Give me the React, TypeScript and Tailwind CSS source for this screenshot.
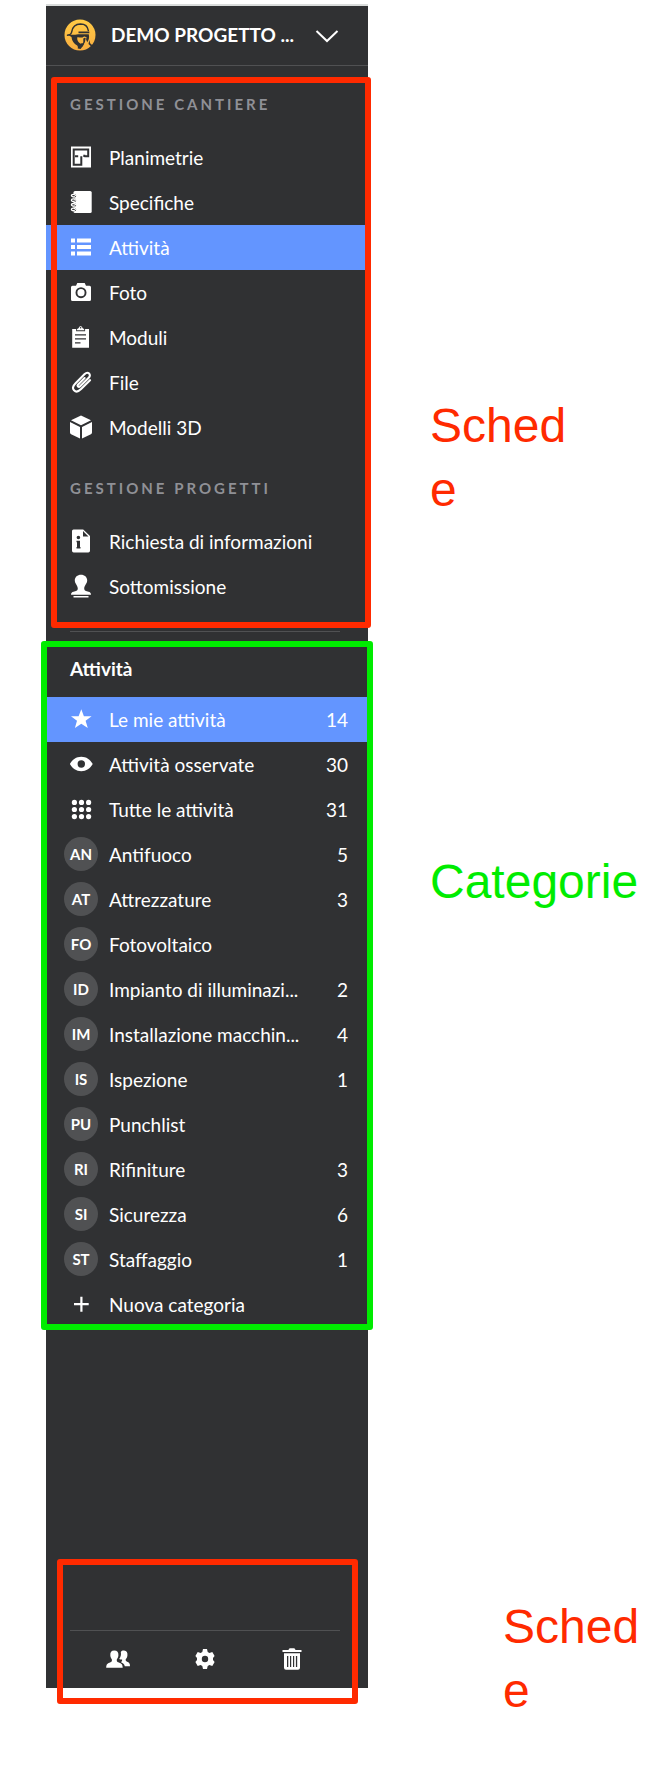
import type { ReactNode } from 'react';

type IconProps = { children: ReactNode; size?: string };

function Icon({ children, size = 'size-6' }: IconProps) {
  return (
    <svg viewBox="0 0 24 24" className={`${size} block fill-white`} aria-hidden="true">
      {children}
    </svg>
  );
}

const PlanIcon = () => (
  <Icon>
    <path d="M2 1.500h20v21H2z" />
    <path d="M15.300 11.200h3.900V4.500H4.700v15.200h7.600v-8.500M6 11.200h3.200M15.300 9.700v2.400" fill="none" stroke="#303133" strokeWidth="2" />
  </Icon>
);

const NotebookIcon = () => (
  <Icon>
    <path d="M6 1h15.200a1.500 1.500 0 0 1 1.500 1.500v19a1.500 1.500 0 0 1-1.500 1.500H6a1.500 1.500 0 0 1-1.500-1.500v-19A1.500 1.500 0 0 1 6 1z" />
    <g fill="none" strokeLinecap="round">
      <path d="M5.500 5.700H3M5.500 10.300H3M5.500 14.900H3M5.500 19.500H3" stroke="#303133" strokeWidth="3.400" />
      <path d="M6.700 5.500c-1-1.700-4.300-1.500-4.300.1 0 1.200 1.700 1.500 2.900 1M6.700 10.100c-1-1.700-4.300-1.500-4.300.1 0 1.200 1.700 1.500 2.900 1M6.700 14.700c-1-1.700-4.300-1.500-4.300.1 0 1.200 1.700 1.500 2.900 1M6.700 19.300c-1-1.700-4.300-1.500-4.300.1 0 1.200 1.700 1.500 2.900 1" stroke="white" strokeWidth="1.300" />
    </g>
  </Icon>
);

const ListIcon = () => (
  <Icon>
    <path d="M2 3.500h4v4H2zM8 3.500h14v4H8zM2 10h4v4H2zM8 10h14v4H8zM2 16.500h4v4H2zM8 16.500h14v4H8z" />
  </Icon>
);

const CameraIcon = () => (
  <Icon>
    <path fillRule="evenodd" d="M8.300 3h7.400l1.300 2.800h3.500A1.500 1.500 0 0 1 22 7.300v12.200a1.500 1.500 0 0 1-1.500 1.500h-17A1.500 1.500 0 0 1 2 19.500V7.300a1.500 1.500 0 0 1 1.500-1.500H7zM12 7.200a5.500 5.500 0 1 0 0 11 5.500 5.500 0 0 0 0-11zm0 1.900a3.600 3.600 0 1 1 0 7.200 3.600 3.600 0 0 1 0-7.200z" />
  </Icon>
);

const ClipboardIcon = () => (
  <Icon>
    <path fillRule="evenodd" d="M3.200 4h3.900v2.200h9V4H20v18.700H3.200zM6 9.300v1.300h11V9.300zm0 4v1.300h11v-1.300zm0 4v1.300h5.500v-1.300z" />
    <path d="M7.700 5.300c.2-1.500 1.200-1.600 2-2.300.5-2.500 3.300-2.500 3.800 0 .8.700 1.800.8 2 2.300z" />
    <circle cx="11.600" cy="2.700" r=".8" fill="#303133" />
  </Icon>
);

const ClipIcon = () => (
  <Icon>
    <path
      d="m15.600 8-6.400 6.400c-1.500 1.600.4 3.400 1.900 1.900l8.600-8.600c1.400-1.400 1.500-3 .4-4.100s-2.900-1-4.400.5L6.600 13.200c-2.900 2.900-3.300 5.400-1.600 7.100s4.500 1.400 7.100-1.200l8.900-8.900"
      fill="none"
      stroke="white"
      strokeWidth="2.100"
      strokeLinecap="round"
    />
  </Icon>
);

const CubeIcon = () => (
  <Icon>
    <path d="M12 .6 22 5.300 12 10.200 2 5.300zM1 7.100l10 4.900v11.600L2.100 19.200A2 2 0 0 1 1 17.400zM23 7.100v10.300a2 2 0 0 1-1.100 1.800L13 23.600V12z" />
  </Icon>
);

const DocInfoIcon = () => (
  <Icon>
    <path fillRule="evenodd" d="M4.500.5h9.700L21 7v14.800a1.700 1.700 0 0 1-1.700 1.700H4.700A1.700 1.700 0 0 1 3 21.800V2A1.500 1.500 0 0 1 4.500.500zM14 2v5.500h5.500zM9.400 6.700a1.800 1.800 0 1 0 0 3.600 1.800 1.800 0 0 0 0-3.600zM7.500 11.700v1.500h.5v4.900h-.5v1.500h4v-1.500H11v-6.400z" />
  </Icon>
);

const StampIcon = () => (
  <Icon>
    <path d="M12 .8c3.600 0 6.200 2.400 6.200 5.700 0 3.100-3 5-3 8 0 2.300 1.800 2.700 4.300 3.200 1.500.3 2.500 1 2.500 3.100H2c0-2.100 1-2.800 2.500-3.100 2.500-.5 4.300-.9 4.300-3.200 0-3-3-4.900-3-8C5.800 3.200 8.400.8 12 .8zM4.500 22h15v1.500h-15z" />
  </Icon>
);

const StarIcon = () => (
  <Icon>
    <path d="m12.300 2.200 2.600 7h7.700l-6 4.600 2.200 7.300-6.500-4.400-6.400 4.400L8 13.800 2 9.200h7.600z" />
  </Icon>
);

const EyeIcon = () => (
  <Icon>
    <path fillRule="evenodd" d="M12.300 4.800c5 0 9 2.800 11.400 7.200-2.400 4.400-6.400 7.200-11.400 7.200S3.300 16.400.900 12C3.300 7.600 7.300 4.800 12.300 4.800zm0 3.500a3.700 3.700 0 1 0 0 7.400 3.700 3.700 0 0 0 0-7.400z" />
  </Icon>
);

const dotCentres = [5.4, 12.5, 19.6];

const GridIcon = () => (
  <Icon>
    {dotCentres.map((cy) => dotCentres.map((cx) => <circle key={`${cx}-${cy}`} cx={cx} cy={cy} r="2.600" />))}
  </Icon>
);

const PlusIcon = () => (
  <Icon>
    <path d="M11.300 4.700h2.200v6.300h6.200v2.200h-6.200v6.500h-2.200v-6.500H5V11h6.300z" />
  </Icon>
);

const PeopleIcon = () => (
  <Icon>
    <path d="M14.800 5.100c.9-1.300 2-1.700 3.300-1.500 2.700.3 3.600 2.300 3.300 5-.2 1.600-.8 2.900-1.700 3.700-.2 1.400.3 2 1.400 2.500 2 .8 2.900 1.400 2.900 4.500h-5.200c-.5-2.300-1.800-3.200-3.800-4.100.900-.7 1.300-1.500 1.100-2.600-1.300-.3-2.200-.3-2.900-.7 1.400-1.400 2.200-4.400 1.600-6.800z" />
    <path d="M8.300 3.600c3 0 4.300 1.900 4.100 4.700-.1 1.800-.7 3.100-1.600 4.100-.2 1.500.2 2.300 1.500 2.900 2.700 1.100 4.400 1.700 4.400 5.400H.200c0-3.700 1.600-4.300 4.200-5.400 1.300-.6 1.700-1.400 1.500-2.900-.9-1-1.500-2.300-1.600-4.100-.2-2.800 1-4.700 4-4.700z" />
  </Icon>
);

const GearIcon = () => (
  <Icon>
    <path fillRule="evenodd" d="M10 2h4l.7 3 1.700 1 2.900-.9 2.300 3.800-1.600 2.200v1.800l1.600 2.200-2.300 3.800-2.900-.9-1.700 1-.7 3h-4l-.7-3-1.700-1-2.900.9-2.300-3.800L4 12.900v-1.800L2.400 8.900l2.300-3.800 2.900.9 1.700-1zm2 6.800a3.200 3.200 0 1 0 0 6.400 3.200 3.200 0 0 0 0-6.400z" />
  </Icon>
);

const TrashIcon = () => (
  <Icon>
    <path d="M2.500 3h6c.3-1.200 1-1.700 1.800-1.700h3.400c.8 0 1.500.5 1.800 1.700h6v2h-19z" />
    <path fillRule="evenodd" d="M4 6.300h16v14.500a2 2 0 0 1-2 2H6a2 2 0 0 1-2-2zM7 9v11h1.300V9zm3 0v11h1.200V9zm3 0v11h1.200V9zm2.900 0v11h1.300V9z" />
  </Icon>
);

function WorkerLogo() {
  return (
    <svg viewBox="0 0 32 32" className="size-8 shrink-0" aria-hidden="true">
      <defs>
        <linearGradient id="amber" x1="0" y1="0" x2="0" y2="1">
          <stop offset="0" stopColor="#ffcb45" />
          <stop offset="1" stopColor="#f9ad40" />
        </linearGradient>
      </defs>
      <circle cx="16" cy="16" r="15.500" fill="url(#amber)" />
      <path
        d="M3.500 16.200c2.800-.3 3.900-1.100 4.300-3.700C8.600 7.600 12.300 5 16.500 4.900c4.300 0 7.200 2.600 7.800 6.600"
        fill="none"
        stroke="#303133"
        strokeWidth="1.500"
        strokeLinecap="round"
      />
      <path d="M14.500 12.500h10.800v1.700H14.500zM3.300 15.500l5 .3c3 .3 5-.6 7.200-.6h9.300c.8 3.500-.2 6.200-1.600 8.100l-1.100-2.900.4-2.400c-1.100-.1-1.500-.6-2.200-.6-1 0-1.300 1-2.500 1.100-1.600.1-2.900-.5-4.500-.3-.5 2.800.8 5.200 3.300 6.600l1.700-.7 1.600 1.400-3.300 4.400-2.900-.3c.4-1.100.2-2.200-.5-3C9.900 24.500 7.800 21.800 7.500 18z" fill="#303133" />
      <path d="M19.300 19.500c1-.7 1.700-1 2.400-.3l-.8 4-3.300 5.500 1.700-5.800z" fill="#303133" />
      <path d="m25.300 21 .8 3.300 2.300 2-1.300 1.300-2.600-2.500z" fill="#303133" />
    </svg>
  );
}

type Item = { label: string; icon?: ReactNode; initials?: string; count?: number; active?: boolean };

const siteItems: Item[] = [
  { label: 'Planimetrie', icon: <PlanIcon /> },
  { label: 'Specifiche', icon: <NotebookIcon /> },
  { label: 'Attività', icon: <ListIcon />, active: true },
  { label: 'Foto', icon: <CameraIcon /> },
  { label: 'Moduli', icon: <ClipboardIcon /> },
  { label: 'File', icon: <ClipIcon /> },
  { label: 'Modelli 3D', icon: <CubeIcon /> },
];

const projectItems: Item[] = [
  { label: 'Richiesta di informazioni', icon: <DocInfoIcon /> },
  { label: 'Sottomissione', icon: <StampIcon /> },
];

const categoryItems: Item[] = [
  { label: 'Le mie attività', icon: <StarIcon />, count: 14, active: true },
  { label: 'Attività osservate', icon: <EyeIcon />, count: 30 },
  { label: 'Tutte le attività', icon: <GridIcon />, count: 31 },
  { label: 'Antifuoco', initials: 'AN', count: 5 },
  { label: 'Attrezzature', initials: 'AT', count: 3 },
  { label: 'Fotovoltaico', initials: 'FO' },
  { label: 'Impianto di illuminazi...', initials: 'ID', count: 2 },
  { label: 'Installazione macchin...', initials: 'IM', count: 4 },
  { label: 'Ispezione', initials: 'IS', count: 1 },
  { label: 'Punchlist', initials: 'PU' },
  { label: 'Rifiniture', initials: 'RI', count: 3 },
  { label: 'Sicurezza', initials: 'SI', count: 6 },
  { label: 'Staffaggio', initials: 'ST', count: 1 },
  { label: 'Nuova categoria', icon: <PlusIcon /> },
];

function ItemList({ items }: { items: Item[] }) {
  return (
    <ul>
      {items.map((item) => (
        <li key={item.label}>
          <a
            href="#"
            className={`flex h-[45px] items-center gap-[11px] pr-5 pl-[18px] text-[19px] leading-6 ${item.active ? 'bg-[#6395ff]' : ''}`}
          >
            <span className="mb-0.5 flex size-[34px] shrink-0 items-center justify-center">
              {item.initials ? (
                <span className="flex size-[34px] items-center justify-center rounded-full bg-[#505153] text-[15px] font-bold">
                  {item.initials}
                </span>
              ) : (
                item.icon
              )}
            </span>
            <span className="flex-1 whitespace-nowrap">{item.label}</span>
            {item.count !== undefined && <span>{item.count}</span>}
          </a>
        </li>
      ))}
    </ul>
  );
}

function GroupTitle({ children }: { children: ReactNode }) {
  return (
    <h2 className="px-6 pt-[26px] pb-[19px] text-[15px] leading-6 font-bold tracking-[3px] text-[#8f9096]">{children}</h2>
  );
}

export default function App() {
  return (
    <div className="flex min-h-screen items-start bg-white pt-1 pb-[86px] pl-[46px] font-['Lato',sans-serif] text-white">
      <aside className="w-[322px] shrink-0 border-t-2 border-[#d9dcdb] bg-[#303133]">
        <header className="border-b border-[#505153]">
          <button type="button" className="flex h-[59px] w-full items-center pr-[29px] pb-0.5 pl-[18px] text-left">
            <WorkerLogo />
            <span className="ml-[15px] flex-1 text-[19px] leading-6 font-bold whitespace-nowrap">DEMO PROGETTO ...</span>
            <svg viewBox="0 0 24 24" className="size-6 fill-none stroke-white stroke-2" aria-hidden="true">
              <path d="m1.500 8 10.500 10L22.500 8" />
            </svg>
          </button>
        </header>

        <nav className="relative pb-[22px]">
          <GroupTitle>GESTIONE CANTIERE</GroupTitle>
          <ItemList items={siteItems} />
          <GroupTitle>GESTIONE PROGETTI</GroupTitle>
          <ItemList items={projectItems} />
          <div className="pointer-events-none absolute top-[11px] -right-[3px] bottom-[3px] left-[5px] rounded-[3px] border-6 border-[#ff2a00]" />
        </nav>

        <section className="relative">
          <hr className="mr-7 ml-6 border-[#505153]" />
          <h2 className="px-6 pt-[25px] pb-4 text-[19px] leading-6 font-bold">Attività</h2>
          <ItemList items={categoryItems} />
          <div className="pointer-events-none absolute -inset-x-[5px] top-[10px] -bottom-[3px] rounded-[3px] border-6 border-[#00ec00]" />
        </section>

        <footer className="relative mt-[232px] pt-[71px]">
          <hr className="mr-7 ml-6 border-[#505153]" />
          <div className="flex h-[57px] items-center gap-[55px] pb-0.5 pl-14">
            <button type="button" aria-label="Persone" className="flex size-8 items-center justify-center">
              <PeopleIcon />
            </button>
            <button type="button" aria-label="Impostazioni" className="flex size-8 items-center justify-center">
              <GearIcon />
            </button>
            <button type="button" aria-label="Cestino" className="flex size-8 items-center justify-center">
              <TrashIcon />
            </button>
          </div>
          <div className="pointer-events-none absolute top-0 right-[10px] -bottom-4 left-[11px] rounded-[3px] border-6 border-[#ff2a00]" />
        </footer>
      </aside>

      <div className="flex flex-1 flex-col pl-[62px] font-['Liberation_Sans',sans-serif] text-5xl leading-16">
        <p className="mt-[390px] w-[150px] break-all text-[#ff2a00]">Schede</p>
        <p className="mt-[328px] text-[#00ec00]">Categorie</p>
        <p className="mt-[681px] mr-[7px] w-[150px] self-end break-all text-[#ff2a00]">Schede</p>
      </div>
    </div>
  );
}
